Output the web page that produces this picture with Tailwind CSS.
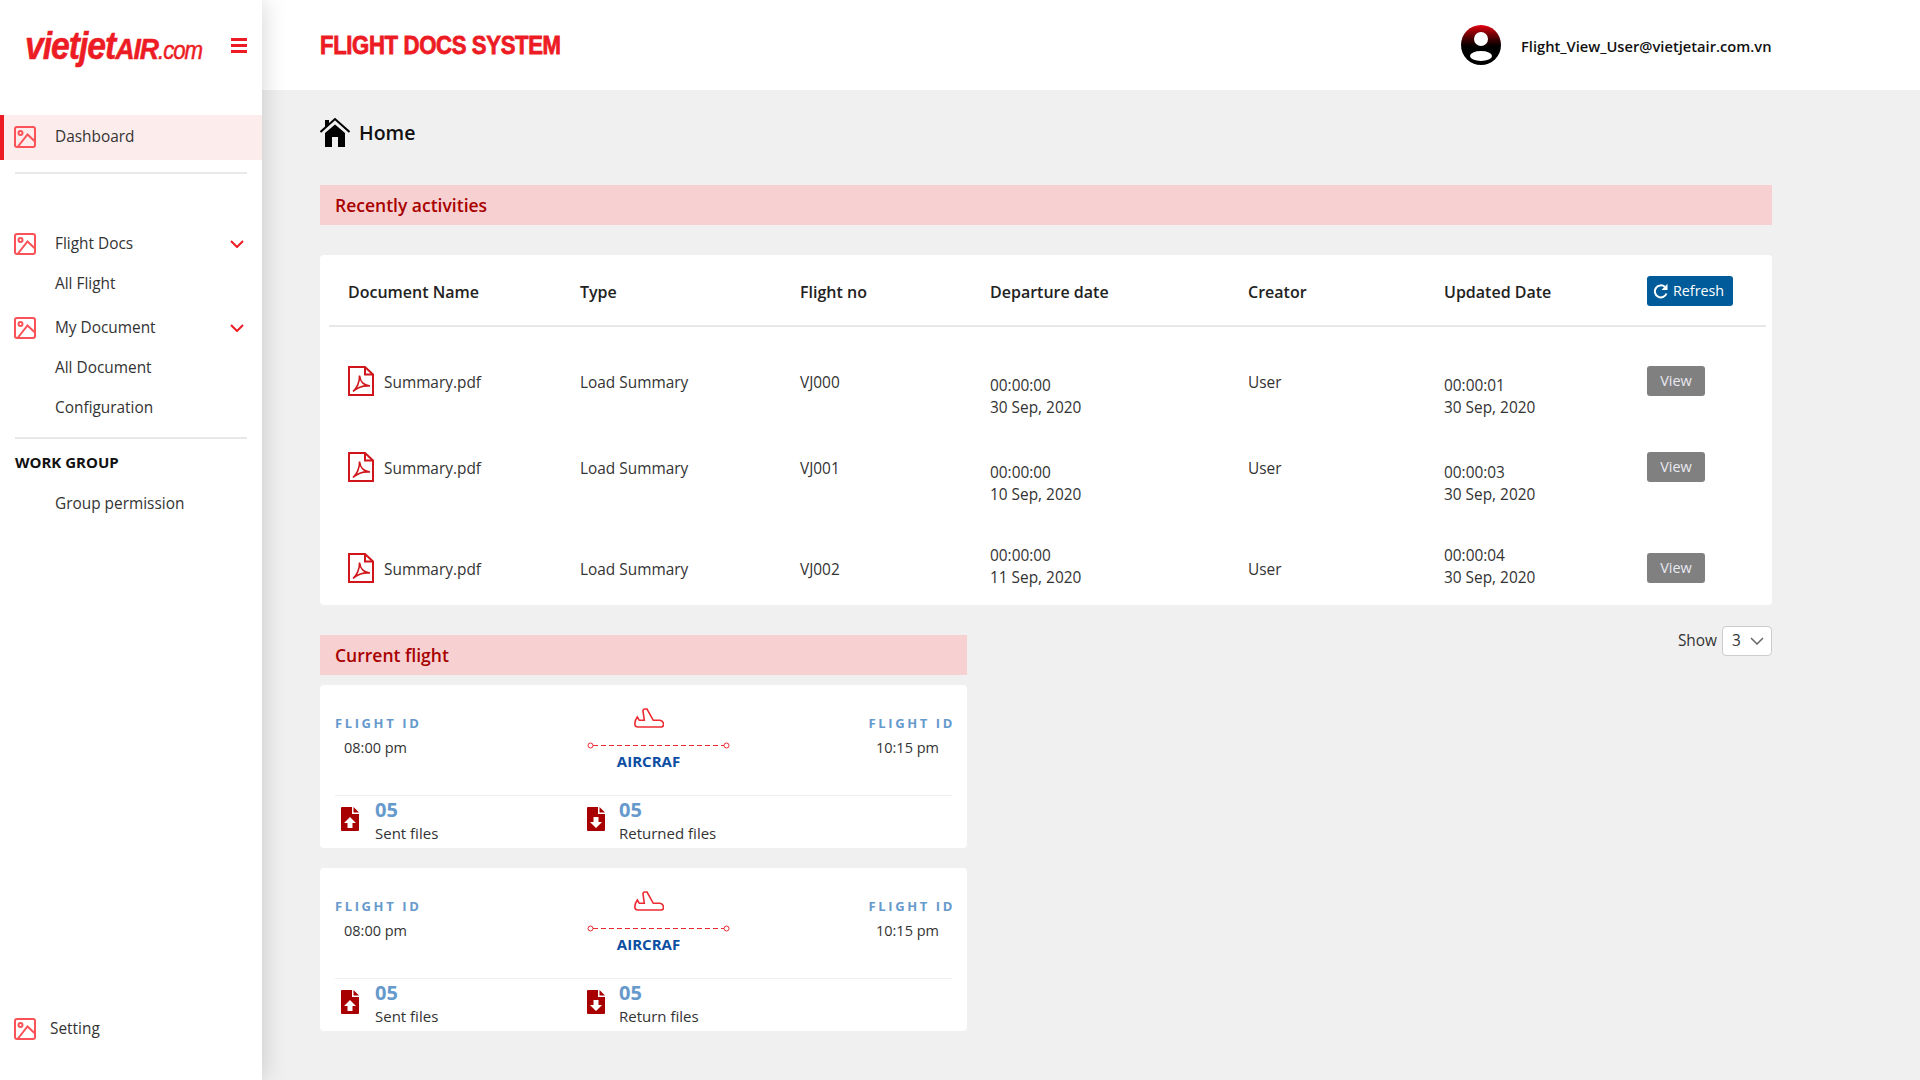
<!DOCTYPE html>
<html lang="en">
<head>
    <meta charset="UTF-8" />
    <title>Flight Docs System</title>
    <script src="https://cdn.jsdelivr.net/npm/@tailwindcss/browser@4"></script>
</head>
<body class="font-['Open_Sans',sans-serif] text-[15.4px] text-[#333] bg-[#f0f0f0]">
    <svg class="hidden">
        <symbol id="img" viewBox="0 0 22 22" fill="none" stroke="#fb5258" stroke-width="2">
            <rect x="1" y="1" width="20" height="20" rx="2"></rect>
            <circle cx="6.5" cy="7" r="2"></circle>
            <path d="M4 20.5 L13.5 8.5 L21 15.5"></path>
        </symbol>
        <symbol id="pdf" viewBox="0 0 26 30" fill="none" stroke="#d0161b" stroke-width="2">
            <path d="M1 1 H17 L25 8.5 V29 H1 Z"></path>
            <path d="M17 1 V8.5 H25"></path>
            <path d="M5 25.5 C8.5 22.5 12 16 11.5 9.5 C12.5 16 15 19 22 20 C16 19.5 10 21 5 25.5 Z" stroke-width="1.6"></path>
        </symbol>
        <symbol id="plane" viewBox="0 0 30 20" fill="none" stroke="#ed2a32" stroke-width="1.6">
            <path d="M10.3 12.3 L9 3 Q9 1 11 1 L13 1 L19.3 12.3 H26 Q29.5 13 29.5 16.5 Q29.5 19 27 19 H4 Q0.8 19 0.8 15.5 Q1 12 3.3 9 L5.3 12.3 Z"></path>
        </symbol>
        <symbol id="file-up" viewBox="0 0 18 24">
            <path fill="#a80000" d="M0 1 Q0 0 1 0 H11 V7 H18 V23 Q18 24 17 24 H1 Q0 24 0 23 Z"></path>
            <path fill="#a80000" d="M12.5 0 L18 5.5 H12.5 Z"></path>
            <path fill="#fff" d="M9 10 L15 16 H11.5 V21 H6.5 V16 H3 Z"></path>
        </symbol>
        <symbol id="file-down" viewBox="0 0 18 24">
            <path fill="#a80000" d="M0 1 Q0 0 1 0 H11 V7 H18 V23 Q18 24 17 24 H1 Q0 24 0 23 Z"></path>
            <path fill="#a80000" d="M12.5 0 L18 5.5 H12.5 Z"></path>
            <path fill="#fff" d="M9 21 L15 15 H11.5 V10 H6.5 V15 H3 Z"></path>
        </symbol>
    </svg>

    <div class="flex h-screen overflow-hidden">
        <!-- Sidebar -->
        <aside class="relative z-10 w-[262px] shrink-0 flex flex-col bg-white shadow-[0_0_24px_rgba(0,0,0,0.18)]">
            <div class="h-[115px] shrink-0 flex items-start pt-[24px] pl-[25px]">
                <div class="w-[180px] h-[44px] origin-left scale-x-[0.89] whitespace-nowrap italic font-bold text-[#ed1c24] font-['Liberation_Sans',sans-serif] leading-[44px] tracking-[-1.2px] [-webkit-text-stroke:0.5px_#ed1c24]">
                    <span class="text-[38px]">vietjet</span><span class="text-[30px]">AIR</span><span class="text-[25px] font-normal">.com</span>
                </div>
                <div class="ml-[26px] mt-[14px] w-[16px] flex flex-col gap-[3px]">
                    <span class="h-[3px] bg-[#ed1c24]"></span>
                    <span class="h-[3px] bg-[#ed1c24]"></span>
                    <span class="h-[3px] bg-[#ed1c24]"></span>
                </div>
            </div>

            <a class="h-[45px] shrink-0 flex items-center border-l-4 border-[#ed1c24] bg-[#fdecec] pl-[10px] pb-[2px]">
                <svg class="w-[22px] h-[22px]"><use href="#img"></use></svg>
                <span class="ml-[19px]">Dashboard</span>
            </a>
            <div class="mx-[15px] mt-[12px] h-[2px] bg-[#e8e8e8]"></div>

            <div class="mt-[50px] h-[40px] flex items-center pl-[14px] pr-[18px]">
                <svg class="w-[22px] h-[22px]"><use href="#img"></use></svg>
                <span class="ml-[19px] flex-1">Flight Docs</span>
                <svg class="w-[14px] h-[8px]" viewBox="0 0 14 8" fill="none" stroke="#ed1c24" stroke-width="2"><path d="M1 1 L7 7 L13 1"></path></svg>
            </div>
            <div class="h-[40px] flex items-center pl-[55px]">All Flight</div>
            <div class="mt-[4px] h-[40px] flex items-center pl-[14px] pr-[18px]">
                <svg class="w-[22px] h-[22px]"><use href="#img"></use></svg>
                <span class="ml-[19px] flex-1">My Document</span>
                <svg class="w-[14px] h-[8px]" viewBox="0 0 14 8" fill="none" stroke="#ed1c24" stroke-width="2"><path d="M1 1 L7 7 L13 1"></path></svg>
            </div>
            <div class="h-[40px] flex items-center pl-[55px]">All Document</div>
            <div class="h-[40px] flex items-center pl-[55px]">Configuration</div>
            <div class="mx-[15px] mt-[9px] h-[2px] bg-[#e8e8e8]"></div>
            <div class="mt-[11px] h-[24px] flex items-center pl-[15px] text-[15px] font-bold text-[#111]">WORK GROUP</div>
            <div class="mt-[10px] h-[40px] flex items-center pl-[55px]">Group permission</div>

            <div class="mt-auto mb-[31px] h-[40px] flex items-center pl-[14px]">
                <svg class="w-[22px] h-[22px]"><use href="#img"></use></svg>
                <span class="ml-[14px]">Setting</span>
            </div>
        </aside>

        <div class="flex-1 min-w-0">
            <!-- Header -->
            <header class="h-[90px] bg-white flex items-center pl-[58px]">
                <h1 class="w-[1141px] pt-[2px] origin-left scale-x-[0.885] whitespace-nowrap font-['Liberation_Sans',sans-serif] font-bold text-[25px] tracking-[-0.4px] text-[#ed1c24] [-webkit-text-stroke:0.8px_#ed1c24]">FLIGHT DOCS SYSTEM</h1>
                <div class="w-[40px] h-[40px] rounded-full bg-gradient-to-b from-[#e60012] to-black to-60% relative overflow-hidden">
                    <span class="absolute left-[13px] top-[7px] w-[14px] h-[14px] rounded-full bg-white"></span>
                    <span class="absolute left-[9px] top-[26px] w-[22px] h-[10px] rounded-[50%] bg-white"></span>
                </div>
                <span class="ml-[20px] pt-[2px] text-[14.7px] font-semibold text-[#111]">Flight_View_User@vietjetair.com.vn</span>
            </header>

            <!-- Content -->
            <main class="pl-[58px] w-[1510px]">
                <div class="h-[95px] flex items-center pb-[9px]">
                    <svg class="w-[30px] h-[30px] -mt-[2px]" viewBox="0 0 30 30">
                        <path fill="#000" d="M5 16 L15 7.5 L25 16 V30 H18 V20 H12 V30 H5 Z"></path>
                        <path fill="none" stroke="#000" stroke-width="2" d="M0.5 15 L15 2 L29.5 15"></path>
                        <path fill="#000" d="M5 3 H9 V7 L5 11 Z"></path>
                    </svg>
                    <span class="ml-[9px] text-[19.5px] font-semibold text-[#111]">Home</span>
                </div>

                <div class="h-[40px] bg-[#f7d1d1] flex items-center pl-[15px] text-[17.5px] font-semibold text-[#a80000]">Recently activities</div>

                <!-- Activity table -->
                <section class="mt-[30px] h-[350px] bg-white rounded-[4px] pl-[9px] pr-[6px]">
                    <div class="h-[72px] pt-[2px] grid grid-cols-[232px_220px_190px_258px_196px_203px_auto] items-center pl-[19px] border-b-2 border-[#e8e8e8] text-[16px] font-semibold text-[#222]">
                        <span class="pt-[2px]">Document Name</span>
                        <span class="pt-[2px]">Type</span>
                        <span class="pt-[2px]">Flight no</span>
                        <span class="pt-[2px]">Departure date</span>
                        <span class="pt-[2px]">Creator</span>
                        <span class="pt-[2px]">Updated Date</span>
                        <button class="w-[86px] h-[30px] rounded-[3px] bg-[#005b9a] text-white text-[14.3px] font-normal flex items-center pl-[6px] gap-[4px]">
                            <svg class="w-[16px] h-[16px]" viewBox="0 0 16 16" fill="none" stroke="#fff" stroke-width="2"><path d="M13.5 10.5 A6 6 0 1 1 12 4"></path><path fill="#fff" stroke="none" d="M14.5 0.8 V7 H8.5 Z"></path></svg>
                            Refresh
                        </button>
                    </div>

                    <div class="h-[86px] mt-[39px] grid grid-cols-[232px_220px_190px_258px_196px_203px_auto] pl-[19px]">
                        <div class="flex items-start">
                            <svg class="w-[26px] h-[30px]"><use href="#pdf"></use></svg>
                            <span class="ml-[10px] mt-[5px]">Summary.pdf</span>
                        </div>
                        <span class="mt-[5px]">Load Summary</span>
                        <span class="mt-[5px]">VJ000</span>
                        <div class="mt-[9px] leading-[21.5px]">00:00:00<br>30 Sep, 2020</div>
                        <span class="mt-[5px]">User</span>
                        <div class="mt-[9px] leading-[21.5px]">00:00:01<br>30 Sep, 2020</div>
                        <button class="w-[58px] h-[30px] rounded-[3px] bg-[#808080] text-[#e8e8f0] text-[14.5px]">View</button>
                    </div>
                    <div class="h-[101px] grid grid-cols-[232px_220px_190px_258px_196px_203px_auto] pl-[19px]">
                        <div class="flex items-start">
                            <svg class="w-[26px] h-[30px]"><use href="#pdf"></use></svg>
                            <span class="ml-[10px] mt-[5px]">Summary.pdf</span>
                        </div>
                        <span class="mt-[5px]">Load Summary</span>
                        <span class="mt-[5px]">VJ001</span>
                        <div class="mt-[10px] leading-[21.5px]">00:00:00<br>10 Sep, 2020</div>
                        <span class="mt-[5px]">User</span>
                        <div class="mt-[10px] leading-[21.5px]">00:00:03<br>30 Sep, 2020</div>
                        <button class="w-[58px] h-[30px] rounded-[3px] bg-[#808080] text-[#e8e8f0] text-[14.5px]">View</button>
                    </div>
                    <div class="grid grid-cols-[232px_220px_190px_258px_196px_203px_auto] pl-[19px]">
                        <div class="flex items-start">
                            <svg class="w-[26px] h-[30px]"><use href="#pdf"></use></svg>
                            <span class="ml-[10px] mt-[5px]">Summary.pdf</span>
                        </div>
                        <span class="mt-[5px]">Load Summary</span>
                        <span class="mt-[5px]">VJ002</span>
                        <div class="-mt-[8px] leading-[21.5px]">00:00:00<br>11 Sep, 2020</div>
                        <span class="mt-[5px]">User</span>
                        <div class="-mt-[8px] leading-[21.5px]">00:00:04<br>30 Sep, 2020</div>
                        <button class="w-[58px] h-[30px] rounded-[3px] bg-[#808080] text-[#e8e8f0] text-[14.5px]">View</button>
                    </div>
                </section>

                <div class="mt-[30px] flex justify-between items-start">
                    <div class="w-[647px]">
                        <div class="h-[40px] bg-[#f7d1d1] flex items-center pl-[15px] text-[17.5px] font-semibold text-[#a80000]">Current flight</div>

                        <!-- Flight card -->
                        <div class="mt-[10px] h-[163px] bg-white rounded-[4px] px-[15px] overflow-hidden">
                            <div class="h-[110px] grid grid-cols-[252px_143px_1fr]">
                                <div class="pt-[29px]">
                                    <div class="text-[13px] font-bold leading-[18px] tracking-[2.6px] text-[#6699cc] whitespace-nowrap">FLIGHT ID</div>
                                    <div class="mt-[6px] ml-[9px] text-[14.5px] leading-[20px]">08:00 pm</div>
                                </div>
                                <div class="flex flex-col items-center pt-[23px]">
                                    <svg class="w-[30px] h-[20px] mr-[20px]"><use href="#plane"></use></svg>
                                    <div class="relative w-[143px] h-[7px] mt-[14px]">
                                        <svg class="absolute inset-0 w-[143px] h-[7px]" viewBox="0 0 143 7" fill="none" stroke="#ed2a32">
                                            <path d="M6 3.5 H137" stroke-dasharray="5 3"></path>
                                            <circle cx="3.5" cy="3.5" r="2.5"></circle>
                                            <circle cx="139.5" cy="3.5" r="2.5"></circle>
                                        </svg>
                                    </div>
                                    <div class="mt-[2px] mr-[20px] text-[15px] font-bold leading-[20px] text-[#0b4ea2]">AIRCRAF</div>
                                </div>
                                <div class="-mr-[3px] pt-[29px] flex flex-col items-end">
                                    <div class="text-[13px] font-bold leading-[18px] tracking-[2.6px] text-[#6699cc] whitespace-nowrap">FLIGHT ID</div>
                                    <div class="mt-[6px] mr-[16px] text-[14.5px] leading-[20px]">10:15 pm</div>
                                </div>
                            </div>
                            <div class="border-t border-[#eee] grid grid-cols-[246px_1fr] pl-[6px]">
                                <div class="flex">
                                    <svg class="w-[18px] h-[24px] mt-[11px]"><use href="#file-up"></use></svg>
                                    <div class="ml-[16px]">
                                        <div class="text-[20px] font-bold leading-[28px] text-[#6699cc]">05</div>
                                        <div class="text-[15px] leading-[18px]">Sent files</div>
                                    </div>
                                </div>
                                <div class="flex">
                                    <svg class="w-[18px] h-[24px] mt-[11px]"><use href="#file-down"></use></svg>
                                    <div class="ml-[14px]">
                                        <div class="text-[20px] font-bold leading-[28px] text-[#6699cc]">05</div>
                                        <div class="text-[15px] leading-[18px]">Returned files</div>
                                    </div>
                                </div>
                            </div>
                        </div>

                        <div class="mt-[20px] h-[163px] bg-white rounded-[4px] px-[15px] overflow-hidden">
                            <div class="h-[110px] grid grid-cols-[252px_143px_1fr]">
                                <div class="pt-[29px]">
                                    <div class="text-[13px] font-bold leading-[18px] tracking-[2.6px] text-[#6699cc] whitespace-nowrap">FLIGHT ID</div>
                                    <div class="mt-[6px] ml-[9px] text-[14.5px] leading-[20px]">08:00 pm</div>
                                </div>
                                <div class="flex flex-col items-center pt-[23px]">
                                    <svg class="w-[30px] h-[20px] mr-[20px]"><use href="#plane"></use></svg>
                                    <div class="relative w-[143px] h-[7px] mt-[14px]">
                                        <svg class="absolute inset-0 w-[143px] h-[7px]" viewBox="0 0 143 7" fill="none" stroke="#ed2a32">
                                            <path d="M6 3.5 H137" stroke-dasharray="5 3"></path>
                                            <circle cx="3.5" cy="3.5" r="2.5"></circle>
                                            <circle cx="139.5" cy="3.5" r="2.5"></circle>
                                        </svg>
                                    </div>
                                    <div class="mt-[2px] mr-[20px] text-[15px] font-bold leading-[20px] text-[#0b4ea2]">AIRCRAF</div>
                                </div>
                                <div class="-mr-[3px] pt-[29px] flex flex-col items-end">
                                    <div class="text-[13px] font-bold leading-[18px] tracking-[2.6px] text-[#6699cc] whitespace-nowrap">FLIGHT ID</div>
                                    <div class="mt-[6px] mr-[16px] text-[14.5px] leading-[20px]">10:15 pm</div>
                                </div>
                            </div>
                            <div class="border-t border-[#eee] grid grid-cols-[246px_1fr] pl-[6px]">
                                <div class="flex">
                                    <svg class="w-[18px] h-[24px] mt-[11px]"><use href="#file-up"></use></svg>
                                    <div class="ml-[16px]">
                                        <div class="text-[20px] font-bold leading-[28px] text-[#6699cc]">05</div>
                                        <div class="text-[15px] leading-[18px]">Sent files</div>
                                    </div>
                                </div>
                                <div class="flex">
                                    <svg class="w-[18px] h-[24px] mt-[11px]"><use href="#file-down"></use></svg>
                                    <div class="ml-[14px]">
                                        <div class="text-[20px] font-bold leading-[28px] text-[#6699cc]">05</div>
                                        <div class="text-[15px] leading-[18px]">Return files</div>
                                    </div>
                                </div>
                            </div>
                        </div>
                    </div>

                    <div class="-mt-[9px] flex items-center">
                        <span class="mr-[5px]">Show</span>
                        <div class="w-[50px] h-[30px] rounded-[4px] border border-[#ccc] bg-white flex items-center justify-between pl-[9px] pr-[7px]">
                            <span>3</span>
                            <svg class="w-[14px] h-[8px]" viewBox="0 0 14 8" fill="none" stroke="#666" stroke-width="1.5"><path d="M1 1 L7 7 L13 1"></path></svg>
                        </div>
                    </div>
                </div>
            </main>
        </div>
    </div>
</body>
</html>
